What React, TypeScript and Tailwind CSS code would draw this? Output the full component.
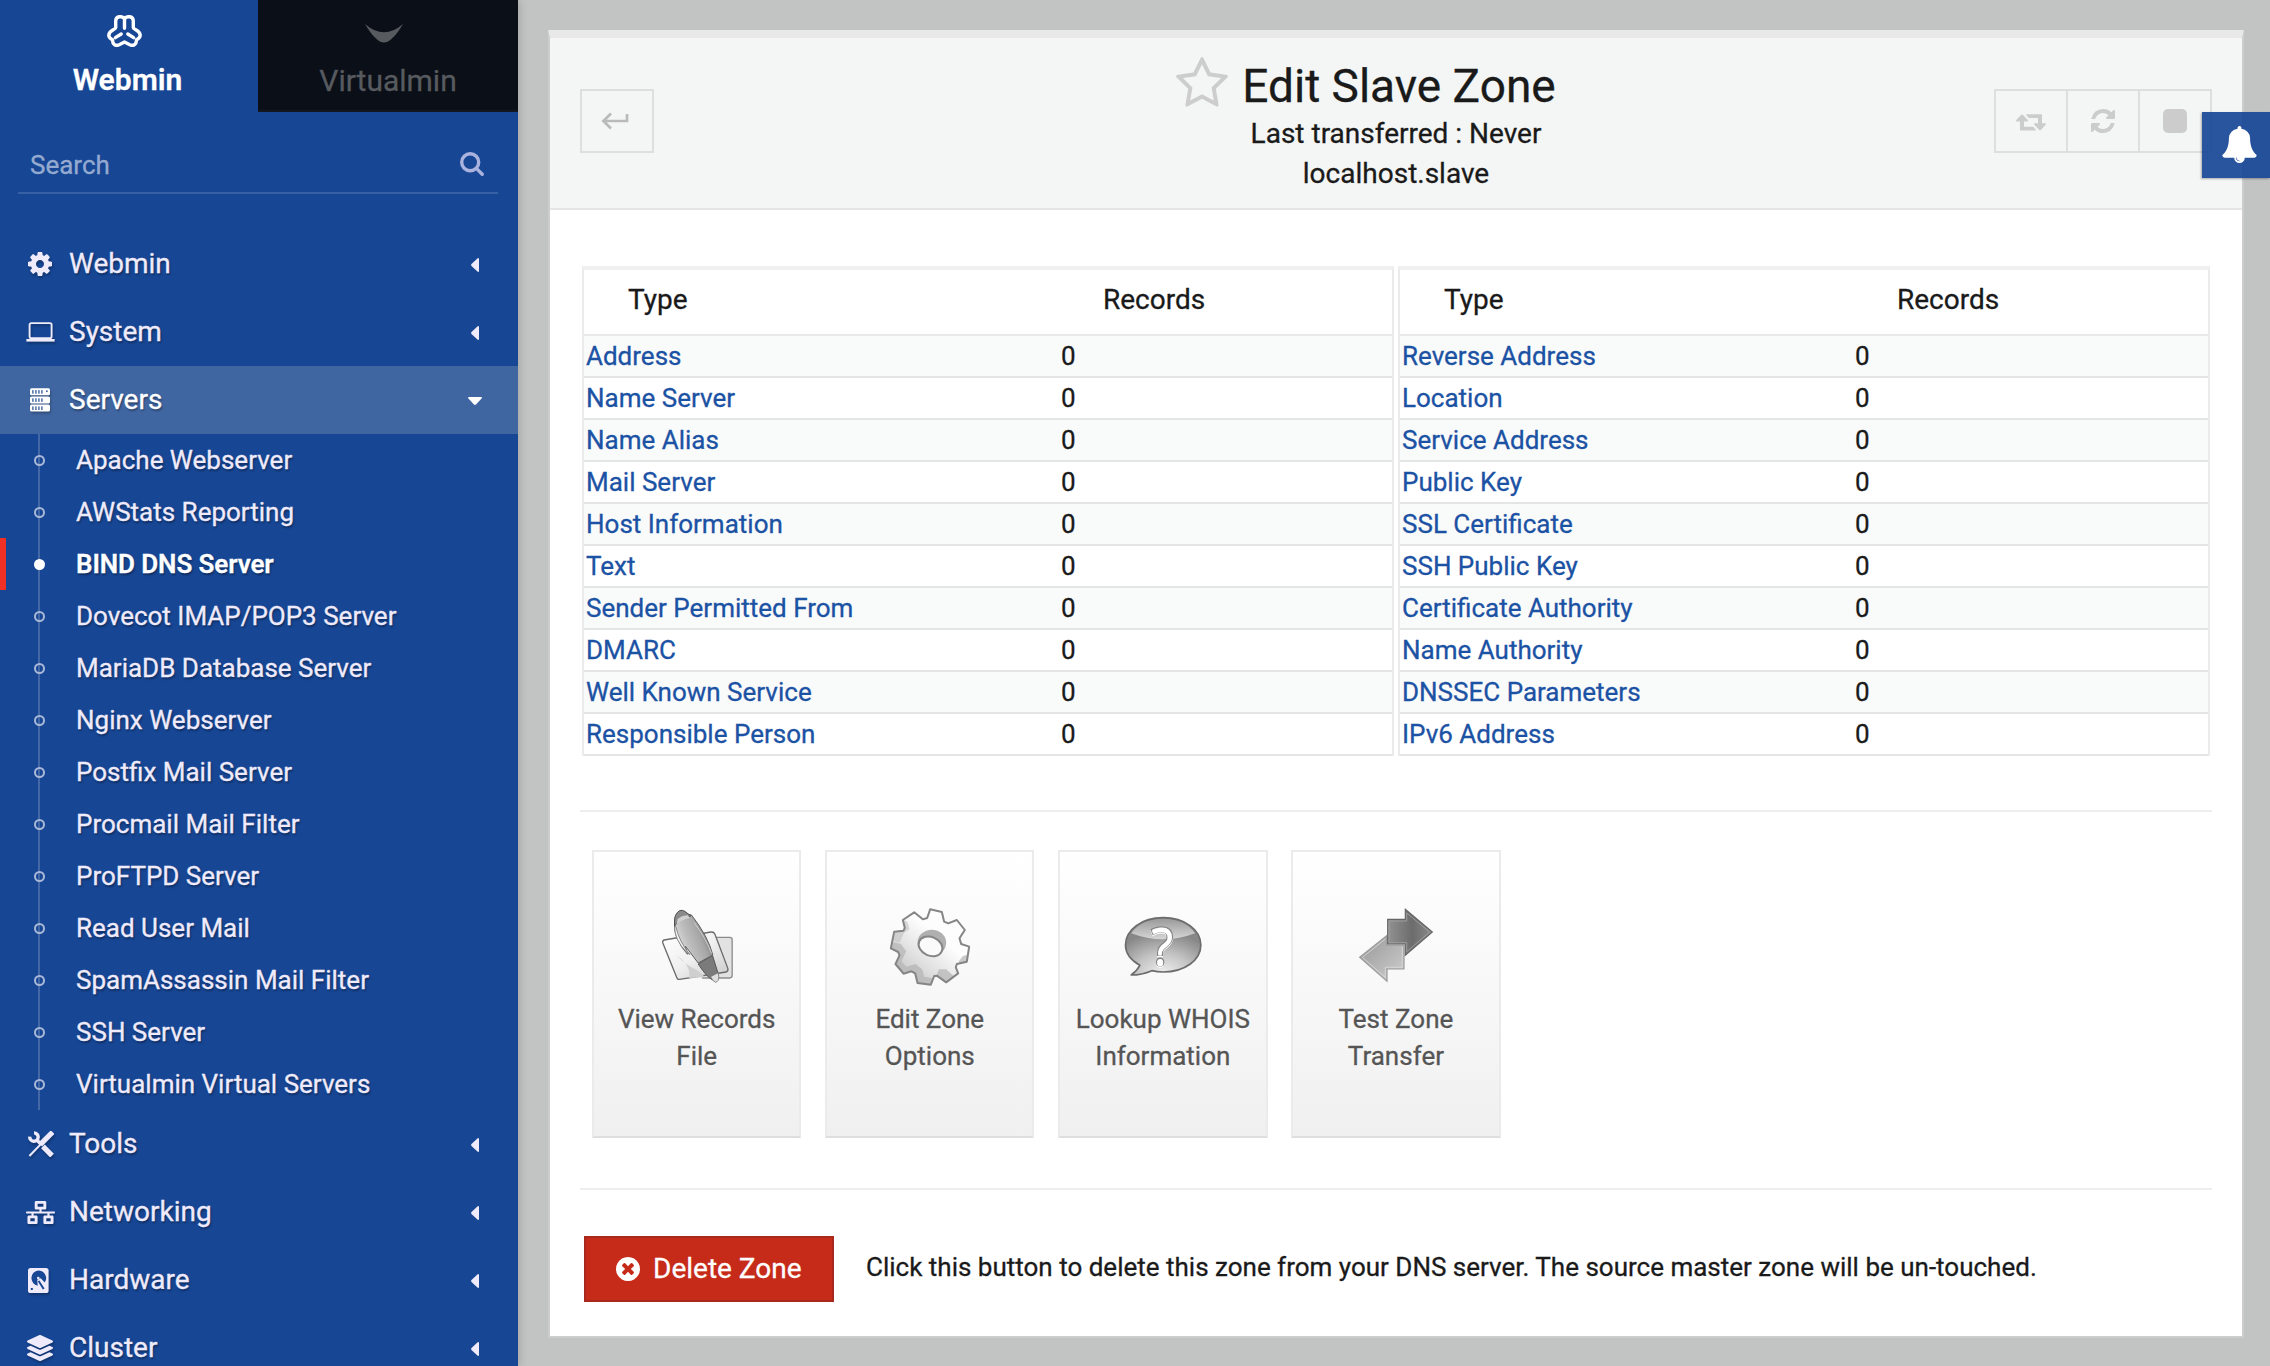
import React from "react";
import { FaNetworkWired, FaLayerGroup } from "react-icons/fa";

const BELL =
  "M912 1696q0-16-16-16-59 0-101.5-42.5t-42.5-101.5q0-16-16-16t-16 16q0 73 51.5 124.5t124.5 51.5q16 0 16-16zm816-288q0 52-38 90t-90 38h-448q0 106-75 181t-181 75-181-75-75-181h-448q-52 0-90-38t-38-90q50-42 91-88t85-119.5 74.5-158.5 50-206 19.5-260q0-152 117-282.5t307-158.5q-8-19-8-39 0-40 28-68t68-28 68 28 28 68q0 20-8 39 190 28 307 158.5t117 282.5q0 139 19.5 260t50 206 74.5 158.5 85 119.5 91 88z";
const COG =
  "M1152 896q0-106-75-181t-181-75-181 75-75 181 75 181 181 75 181-75 75-181zm512-109v222q0 12-8 23t-20 13l-185 28q-19 54-39 91 35 50 107 138 10 12 10 25t-9 23q-27 37-99 108t-94 71q-12 0-26-9l-138-108q-44 23-91 38-16 136-29 186-7 28-36 28h-222q-14 0-24.5-8.5t-11.5-21.5l-28-184q-49-16-90-37l-141 107q-10 9-25 9-14 0-25-11-126-114-165-168-7-10-7-23 0-12 8-23 15-21 51-66.5t54-70.5q-27-50-41-99l-183-27q-13-2-21-12.5t-8-23.5v-222q0-12 8-23t19-13l186-28q14-46 39-92-40-57-107-138-10-12-10-24 0-10 9-23 26-36 98.5-107.5t94.5-71.5q13 0 26 10l138 107q44-23 91-38 16-136 29-186 7-28 36-28h222q14 0 24.5 8.5t11.5 21.5l28 184q49 16 90 37l142-107q9-9 24-9 13 0 25 10 129 119 165 170 7 8 7 22 0 12-8 23-15 21-51 66.5t-54 70.5q26 50 41 98l183 28q13 2 21 12.5t8 23.5z";
const REFRESH =
  "M1639 1056q0 5-1 7-64 268-268 434.5t-478 166.5q-146 0-282.5-55t-243.5-157l-129 129q-19 19-45 19t-45-19-19-45v-448q0-26 19-45t45-19h448q26 0 45 19t19 45-19 45l-137 137q71 66 161 102t187 36q134 0 250-65t186-179q11-17 53-117 8-23 30-23h192q13 0 22.5 9.5t9.5 22.5zm25-800v448q0 26-19 45t-45 19h-448q-26 0-45-19t-19-45 19-45l138-138q-148-137-349-137-134 0-250 65t-186 179q-11 17-53 117-8 23-30 23h-199q-13 0-22.5-9.5t-9.5-22.5v-7q65-268 270-434.5t480-166.5q146 0 284 55.5t245 156.5l130-129q19-19 45-19t45 19 19 45z";
const RETWEET =
  "M1280 1504q0 13-9.5 22.5t-22.5 9.5h-960q-8 0-13.5-2t-9-7-5.5-8-3-11.5-1-11.5v-600h-192q-26 0-45-19t-19-45q0-24 15-41l320-384q19-22 49-22t49 22l320 384q15 17 15 41 0 26-19 45t-45 19h-192v384h576q16 0 25 11l160 192q7 10 7 21zm640-416q0 24-15 41l-320 384q-20 23-49 23t-49-23l-320-384q-15-17-15-41 0-26 19-45t45-19h192v-384h-576q-16 0-25-12l-160-192q-7-9-7-20 0-13 9.5-22.5t22.5-9.5h960q8 0 13.5 2t9 7 5.5 8 3 11.5 1 11.5v600h192q26 0 45 19t19 45z";
const TIMES_CIRCLE =
  "M1277 1122q0-26-19-45l-181-181 181-181q19-19 19-45 0-27-19-46l-90-90q-19-19-46-19-26 0-45 19l-181 181-181-181q-19-19-45-19-27 0-46 19l-90 90q-19 19-19 46 0 26 19 45l181 181-181 181q-19 19-19 45 0 27 19 46l90 90q19 19 46 19 26 0 45-19l181-181 181 181q19 19 45 19 27 0 46-19l90-90q19-19 19-46zm387-226q0 209-103 385.5t-279.5 279.5-385.5 103-385.5-103-279.5-279.5-103-385.5 103-385.5 279.5-279.5 385.5-103 385.5 103 279.5 279.5 103 385.5z";
const STAR =
  "M1201 1004l306-297-422-62-189-382-189 382-422 62 306 297-73 421 378-199 377 199zm527-357q0 22-26 48l-363 354 86 500q1 7 1 20 0 50-41 50-19 0-40-12l-449-236-449 236q-22 12-40 12-21 0-31.5-14.5t-10.5-35.5q0-6 2-20l86-500-364-354q-25-27-25-48 0-37 56-46l502-73 225-455q19-41 49-41t49 41l225 455 502 73q56 9 56 46z";

function Glyph({ d, className }: { d: string; className: string }) {
  return (
    <svg viewBox="0 0 1792 1792" fill="currentColor" className={className}>
      <path d={d} />
    </svg>
  );
}

function WebminLogo() {
  return (
    <svg viewBox="0 0 35 32" className="h-8 w-[35px]" fill="none" stroke="#fff" strokeWidth="3.4" strokeLinecap="round" strokeLinejoin="round">
      <path d="M17.5 3.6C15.4 .9 8.9 .6 8.7 6v6.6C8.6 14.8 1.8 15.4 1.8 20.2c0 2.6 2 3.6 3.8 4.6-.4 4.6 3 6.6 6.600 4.900l5.300-2.700 5.300 2.700c3.600 1.700 7-.300 6.600-4.900 1.800-1 3.800-2 3.800-4.600 0-4.800-6.800-5.400-6.900-7.600V6C26.100.6 19.600.9 17.500 3.600z" />
      <path d="M17.5 3.6v9.600M14.200 19l-5.800 3.600M20.800 19l5.800 3.600" />
    </svg>
  );
}

function LaptopIcon() {
  return (
    <svg viewBox="0 0 29 20" className="h-5 w-[29px]">
      <rect x="3.6" y="1.1" width="22" height="15" rx="1.6" fill="none" stroke="currentColor" strokeWidth="1.9" />
      <rect x="0.4" y="17" width="28.2" height="2.6" fill="currentColor" />
    </svg>
  );
}

function ServerIcon() {
  return (
    <svg viewBox="0 0 20 24" className="h-6 w-5">
      {[0.3, 8.5, 16.6].map((y, r) => (
        <g key={y}>
          <rect x="0" y={y} width="20" height="7" rx="1.6" fill="currentColor" />
          {[2.2, 5.2, 8.2, 11.2].map((x) => (
            <rect key={x} x={x} y={y + 1.8} width="1.4" height="3.6" fill="#4066a2" />
          ))}
          {r === 0 && <rect x="16" y="2.4" width="1.7" height="1.7" fill="#4066a2" />}
        </g>
      ))}
    </svg>
  );
}

function ToolsIcon() {
  return (
    <svg viewBox="0 0 26 26" className="h-[26px] w-[26px]" fill="none" stroke="currentColor">
      <path d="M1.8 5.6A4.2 4.2 0 1 0 6 1.9" strokeWidth="3.4" />
      <path d="M8.6 8.8l4.4 4.4" strokeWidth="3.4" />
      <path d="M16.8 17.2l5.400 5.600" strokeWidth="5.2" strokeLinecap="square" />
      <path d="M22.8 3L14 11.8" strokeWidth="5.2" strokeLinecap="square" />
      <path d="M13.6 12.4L1.4 25" strokeWidth="2" />
    </svg>
  );
}

function DriveIcon() {
  return (
    <svg viewBox="0 0 21 25" className="h-[25px] w-[21px]">
      <rect x="0" y="0" width="20.6" height="25" rx="2.6" fill="currentColor" />
      <path d="M10.3 2.400a7.800 7.800 0 0 1 6.400 12.200l-4-4.400-3.400 1.600.4 6A7.800 7.800 0 0 1 10.300 2.400z" fill="#174694" />
      <circle cx="10.300" cy="10" r="1.300" fill="currentColor" />
      <path d="M9.800 13.200l1.600-.6 5.200 7.800-1.800 1.200z" fill="#174694" />
      <rect x="2.8" y="20" width="2" height="2" fill="#174694" />
    </svg>
  );
}

function CaretLeft() {
  return (
    <svg viewBox="0 0 8 14" className="h-3.5 w-2" fill="currentColor">
      <path d="M8 1v12c0 1-.9 1.2-1.6.6L.5 8Q-.3 7 .5 6L6.4.4C7.100-.2 8 0 8 1z" />
    </svg>
  );
}

function CaretDown() {
  return (
    <svg viewBox="0 0 14 8" className="h-2 w-3.5" fill="currentColor">
      <path d="M1 0h12c1 0 1.200.9.6 1.600L8 7.500Q7 8.300 6 7.500L.4 1.600C-.2.9 0 0 1 0z" />
    </svg>
  );
}

function MenuRow({ icon, label, open, wide }: { icon: React.ReactNode; label: string; open?: boolean; wide?: boolean }) {
  return (
    <div className={`flex h-[68px] shrink-0 items-center ${open ? "bg-[#4066a2] text-white" : "text-[#efebfb]"}`}>
      <span className={`flex w-20 items-center justify-center drop-shadow-[1px_2px_1px_rgba(0,0,0,0.25)] ${open || wide ? "" : "pl-px"}`}>{icon}</span>
      <span className="-ml-[11px] flex-1 pb-px text-[28px] leading-8 [text-shadow:1px_2px_2px_rgba(0,0,0,0.35)]">{label}</span>
      <span className="mr-[29px] flex w-[29px] items-center justify-center pt-0.5">{open ? <CaretDown /> : <CaretLeft />}</span>
    </div>
  );
}

const servers = [
  "Apache Webserver",
  "AWStats Reporting",
  "BIND DNS Server",
  "Dovecot IMAP/POP3 Server",
  "MariaDB Database Server",
  "Nginx Webserver",
  "Postfix Mail Server",
  "Procmail Mail Filter",
  "ProFTPD Server",
  "Read User Mail",
  "SpamAssassin Mail Filter",
  "SSH Server",
  "Virtualmin Virtual Servers",
];

function SubRow({ label }: { label: string }) {
  const active = label === "BIND DNS Server";
  return (
    <div className={`flex h-[52px] items-center border-l-[6px] ${active ? "border-[#ee3124]" : "border-transparent"}`}>
      <span className="relative ml-8 flex h-full w-0.5 items-center justify-center bg-[#4468a5]">
        <span className={`size-[11px] shrink-0 rounded-full ${active ? "bg-white" : "border-2 border-[#a9b8d6]"}`} />
      </span>
      <span
        className={`ml-9 pb-px text-[26px] leading-8 [text-shadow:1px_2px_2px_rgba(0,0,0,0.35)] ${active ? "font-semibold tracking-[-0.1px] text-white" : "text-[#efebfb]"}`}
      >
        {label}
      </span>
    </div>
  );
}

function Sidebar() {
  return (
    <aside className="z-10 flex h-full w-[518px] shrink-0 flex-col overflow-hidden bg-[#174694] shadow-[0_0_9px_rgba(0,0,0,0.22)]">
      <div className="flex h-28 shrink-0">
        <div className="flex w-[258px] flex-col items-center pt-[15px] text-white">
          <div className="-ml-2.5">
            <WebminLogo />
          </div>
          <span className="mt-[15px] -ml-[3px] text-[30px] leading-9 font-semibold">Webmin</span>
        </div>
        <div className="flex w-[260px] flex-col items-center border-b-2 border-[#131820] bg-[#0b0f17] pt-6 text-[#575a5f]">
          <svg viewBox="0 0 38 19" className="-ml-2 h-[19px] w-[38px]" fill="currentColor">
            <path d="M0 0q9.500 8.300 19 8.300T38 0C31 12 24 18.600 19 18.600S7 12 0 0z" />
          </svg>
          <span className="mt-5 text-[30px] leading-9">Virtualmin</span>
        </div>
      </div>
      <div className="mt-8 mr-5 ml-[18px] flex h-[50px] shrink-0 items-start justify-between border-b-2 border-[#3861a5] pr-3.5 pl-3">
        <span className="pt-[5px] text-[26px] leading-8 text-[#95aad0]">Search</span>
        <svg viewBox="0 0 24 24" className="mt-2 size-6" fill="none" stroke="#aab2de" strokeWidth="3.4" strokeLinecap="round">
          <circle cx="10.200" cy="10.200" r="8.500" />
          <path d="M16.400 16.400l5.800 5.800" />
        </svg>
      </div>
      <div className="mt-9 flex flex-col">
        <MenuRow icon={<Glyph d={COG} className="size-7" />} label="Webmin" wide />
        <MenuRow icon={<LaptopIcon />} label="System" />
        <MenuRow icon={<ServerIcon />} label="Servers" open />
        {servers.map((s) => (
          <SubRow key={s} label={s} />
        ))}
        <MenuRow icon={<ToolsIcon />} label="Tools" />
        <MenuRow icon={<FaNetworkWired className="size-[29px]" />} label="Networking" />
        <MenuRow icon={<span className="pr-1"><DriveIcon /></span>} label="Hardware" />
        <MenuRow icon={<span className="pr-0.5"><FaLayerGroup className="size-[26px]" /></span>} label="Cluster" />
      </div>
    </aside>
  );
}

function RecordTable({ rows, typeWidth }: { rows: string[]; typeWidth: string }) {
  return (
    <div className="flex-1 border-x-2 border-t-4 border-x-[#ebebeb] border-t-[#f0f0f0]">
      <div className="flex h-[66px] items-center border-b-2 border-[#e9e9e9] pb-1 text-[28px] text-[#1a1a1a]">
        <span className={`${typeWidth} shrink-0 pl-11`}>Type</span>
        <span className="pl-[45px]">Records</span>
      </div>
      {rows.map((r) => (
        <div key={r} className="flex h-[42px] items-center border-b-2 border-[#e4e5e5] text-[26px] odd:bg-white even:bg-[#f9fbfa]">
          <span className={`${typeWidth} shrink-0 pl-0.5 text-[#1c52a4]`}>{r}</span>
          <span className="pl-[3px] text-[#1a1a1a]">0</span>
        </div>
      ))}
    </div>
  );
}

const left = ["Address", "Name Server", "Name Alias", "Mail Server", "Host Information", "Text", "Sender Permitted From", "DMARC", "Well Known Service", "Responsible Person"];
const right = ["Reverse Address", "Location", "Service Address", "Public Key", "SSL Certificate", "SSH Public Key", "Certificate Authority", "Name Authority", "DNSSEC Parameters", "IPv6 Address"];

function RecordsIcon() {
  return (
    <svg viewBox="230.500 198 300 300" className="size-[100px]">
      <defs>
        <linearGradient id="pen" x1="0.150" y1="0.650" x2="0.850" y2="0.300">
          <stop offset="0" stopColor="#d8d8d8" />
          <stop offset="0.300" stopColor="#bdbdbd" />
          <stop offset="0.700" stopColor="#a6a6a6" />
          <stop offset="1" stopColor="#7d7d7d" />
        </linearGradient>
        <linearGradient id="sheet" x1="0" y1="0" x2="1" y2="1">
          <stop offset="0" stopColor="#fff" />
          <stop offset="0.500" stopColor="#f0f0f0" />
          <stop offset="1" stopColor="#c9c9c9" />
        </linearGradient>
      </defs>
      <path d="M425 322h54q7 0 7 7v107q0 8-8 8h-80z" fill="#e2e2e2" stroke="#8c8c8c" strokeWidth="4" />
      <path d="M282 330l140-24q9-1 12 6l39 103q2 8-5 11l-140 22q-6 1-8-5l-42-104q-2-7 4-9z" fill="url(#sheet)" stroke="#6b6b6b" strokeWidth="4" />
      <path d="M318 375q28 30 62 45l26 22-50 2q10-35-38-69z" fill="#cfcfcf" />
      <path d="M384 402l43-26 16 52q2 20-10 24-20-5-49-50z" fill="#7b7b7b" stroke="#555" strokeWidth="3" />
      <path d="M421 440l23-12 2 12q0 15-10 17-9-4-15-17z" fill="#dedede" stroke="#777" strokeWidth="2.500" />
      <path d="M315 262q-5 34 4 58 14 34 33 53l-6-24 38 50 44-24q-14-56-64-120-22-8-49 7z" fill="url(#pen)" stroke="#606060" strokeWidth="3" />
      <path d="M313 290q0 40 36 76l10 8q-32-40-42-84z" fill="#f2f2f2" stroke="#777" strokeWidth="2.500" />
      <path d="M313 276q-1-24 15-34 8-3 16 2l18 14q-30 2-49 30z" fill="#8a8a8a" stroke="#505050" strokeWidth="3" />
      <path d="M323 266q14-10 30-10l6 8q-22 4-40 18z" fill="#d0d0d0" />
      <path d="M372 278q36 48 52 92" fill="none" stroke="#cfcfcf" strokeWidth="3" />
    </svg>
  );
}

function OptionsIcon() {
  const gear =
    "M1080 238L1115 246L1122 275L1134 280L1160 270L1184 300L1168 325L1173 342L1197 350L1190 395L1160 402L1157 412L1164 430L1128 457L1100 437L1092 438L1082 464L1042 459L1035 430L1024 424L1000 431L976 402L988 376L984 366L962 355L972 305L1000 302L1004 294L998 270L1032 247L1058 268L1071 264Z";
  return (
    <svg viewBox="929.500 198 300 300" className="size-[100px]">
      <defs>
        <linearGradient id="gear" x1="0.100" y1="0.900" x2="0.700" y2="0.200">
          <stop offset="0" stopColor="#c4c4c4" />
          <stop offset="0.400" stopColor="#e2e2e2" />
          <stop offset="0.800" stopColor="#fdfdfd" />
        </linearGradient>
        <clipPath id="gear-clip">
          <path d={gear} />
        </clipPath>
      </defs>
      <path d={gear} fill="url(#gear)" />
      <g clipPath="url(#gear-clip)">
        <path
          d="M960 358l8-22 24 6 16 22-14 30 14 16 28-8 20 16 6 22 34 6 10-28 22 0 22 20 24-18-8-26 12-16 32-8v120h-250z"
          fill="#b4b4b4"
          opacity="0.700"
        />
        <path d="M996 268l16 8 6 22-16 10-14 30-30-10z" fill="#c2c2c2" opacity="0.600" />
      </g>
      <path d={gear} fill="none" stroke="#858585" strokeWidth="6" strokeLinejoin="round" />
      <ellipse cx="1085" cy="338" rx="43" ry="39" fill="#b0b0b0" />
      <ellipse cx="1081" cy="349" rx="37" ry="28" transform="rotate(24 1081 349)" fill="#fafafa" stroke="#858585" strokeWidth="6" />
    </svg>
  );
}

function WhoisIcon() {
  const bubble = "M368 263C432 263 481 299 481 345S432 426 368 426Q350 426 334 422Q304 435 272 435Q290 422 298 406C272 391 255 369 255 345C255 299 304 263 368 263Z";
  return (
    <svg viewBox="217.500 198 300 300" className="size-[100px]">
      <defs>
        <radialGradient id="bubble" cx="0.500" cy="1" r="0.750">
          <stop offset="0" stopColor="#f2f2f2" />
          <stop offset="0.500" stopColor="#c4c4c4" />
          <stop offset="1" stopColor="#878787" />
        </radialGradient>
        <linearGradient id="gloss" x1="0" y1="0" x2="0" y2="1">
          <stop offset="0" stopColor="#9a9a9a" />
          <stop offset="1" stopColor="#d6d6d6" />
        </linearGradient>
      </defs>
      <path d={bubble} fill="url(#bubble)" />
      <path d="M272 310C290 280 330 266 368 266S446 280 464 310Q368 346 272 310Z" fill="url(#gloss)" />
      <path d={bubble} fill="none" stroke="#6c6c6c" strokeWidth="5" strokeLinejoin="round" />
      <text x="365" y="404" textAnchor="middle" fontFamily="Open Sans" fontWeight="500" fontSize="152" fill="#fff" stroke="#868686" strokeWidth="8" paintOrder="stroke">
        ?
      </text>
    </svg>
  );
}

function TransferIcon() {
  return (
    <svg viewBox="918 198 300 300" className="size-[100px]">
      <defs>
        <linearGradient id="fwd" x1="0" y1="0" x2="1" y2="0">
          <stop offset="0" stopColor="#929292" />
          <stop offset="0.550" stopColor="#6c6c6c" />
          <stop offset="1" stopColor="#8a8a8a" />
        </linearGradient>
        <linearGradient id="back" x1="0" y1="0" x2="1" y2="1">
          <stop offset="0.200" stopColor="#a2a2a2" />
          <stop offset="1" stopColor="#cfcfcf" />
        </linearGradient>
      </defs>
      <path d="M1092 345V417H1041V454L959 382L1040 317V345Z" fill="url(#back)" stroke="#999" strokeWidth="3.500" />
      <path d="M1087 350V412H1036V442L967 382L1036 327" fill="none" stroke="#dadada" strokeWidth="2.500" />
      <path d="M1043 268H1096V238L1177 306L1096 376V342H1043Z" fill="url(#fwd)" stroke="#666" strokeWidth="3.500" />
      <path d="M1047 273H1100V249L1169 306L1100 365V338H1047Z" fill="none" stroke="#a2a2a2" strokeWidth="2.500" />
    </svg>
  );
}

function Card({ icon, lines }: { icon: React.ReactNode; lines: [string, string] }) {
  return (
    <div className="flex h-72 w-[209.4px] flex-col items-center border-2 border-[#ebebeb] border-b-[#dedede] bg-linear-to-b from-white to-[#f0f0f0] pt-11 text-center text-[26px] leading-[37px] text-[#555] [text-shadow:0_1px_0_#fff]">
      {icon}
      <div className="mt-[4.500px]">
        {lines[0]}
        <br />
        {lines[1]}
      </div>
    </div>
  );
}

function PageHeader() {
  return (
    <header className="flex h-[172px] shrink-0 items-start justify-between border-b-2 border-[#e5e5e5] bg-[#f4f6f5] px-[30px]">
      <div className="mt-[51px] flex w-[218px]">
        <button className="flex h-16 w-[74px] items-center justify-center border-2 border-[#dedede] pr-[5px]">
          <svg viewBox="0 0 28 18" className="h-[18px] w-7" fill="none" stroke="#bababa" strokeWidth="2.700">
            <path d="M10 1.500L2.400 9l7.600 7.500M2.600 9H26V2" />
          </svg>
        </button>
      </div>
      <div className="flex flex-col items-center pt-[21px] text-[28px] leading-10 text-[#1a1a1a]">
        <h1 className="relative left-[3px] mb-px text-[46px] leading-[54px] whitespace-nowrap">
          <Glyph d={STAR} className="absolute -top-[3px] right-full mr-3 size-14 text-[#cdcdcd]" />
          Edit Slave Zone
        </h1>
        <span>Last transferred : Never</span>
        <span>localhost.slave</span>
      </div>
      <div className="mt-[51px] flex h-16 w-[218px] border-2 border-[#dedede] text-[#ccc]">
        <button className="flex w-[72px] items-center justify-center border-r-2 border-[#dedede]">
          <svg viewBox="0 0 1920 1792" preserveAspectRatio="none" className="h-[25px] w-[30px]" fill="currentColor">
            <path d={RETWEET} />
          </svg>
        </button>
        <button className="flex w-[72px] items-center justify-center border-r-2 border-[#dedede]">
          <Glyph d={REFRESH} className="size-7" />
        </button>
        <button className="flex flex-1 items-center justify-center">
          <span className="size-6 rounded-[5px] bg-[#ccc]" />
        </button>
      </div>
    </header>
  );
}

export default function App() {
  return (
    <div className="relative flex h-[1366px] w-[2270px] overflow-hidden bg-[#c2c4c3] font-['Roboto',sans-serif] [-webkit-text-stroke:0.3px]">
      <Sidebar />
      <main className="mt-[30px] ml-[30px] flex h-[1308px] w-[1696px] flex-col border-2 border-t-8 border-[#cdcdcd] border-t-[#e8e8e8] bg-white">
        <PageHeader />
        <div className="flex flex-col px-[30px]">
          <div className="mx-0.5 mt-14 flex gap-1">
            <RecordTable rows={left} typeWidth="w-[474px]" />
            <RecordTable rows={right} typeWidth="w-[452px]" />
          </div>
          <div className="mt-[54px] h-0.5 bg-[#eeeeee]" />
          <div className="mt-[38px] ml-3 flex gap-[23.7px]">
            <Card icon={<RecordsIcon />} lines={["View Records", "File"]} />
            <Card icon={<OptionsIcon />} lines={["Edit Zone", "Options"]} />
            <Card icon={<WhoisIcon />} lines={["Lookup WHOIS", "Information"]} />
            <Card icon={<TransferIcon />} lines={["Test Zone", "Transfer"]} />
          </div>
          <div className="mt-[50px] h-0.5 bg-[#eeeeee]" />
          <div className="mt-[46px] ml-1 flex items-center">
            <button className="flex h-[66px] w-[250px] items-center border-2 border-[#a8281b] bg-[#c62a18] pl-7 text-[28px] text-white">
              <Glyph d={TIMES_CIRCLE} className="size-7" />
              <span className="ml-[11px]">Delete Zone</span>
            </button>
            <p className="ml-8 pb-1 text-[26px] text-[#1a1a1a]">
              Click this button to delete this zone from your DNS server. The source master zone will be un-touched.
            </p>
          </div>
        </div>
      </main>
      <div className="absolute top-28 right-0 flex h-[66px] w-[68px] items-start bg-[#174696]/92 pt-3.5 pl-[19px] text-white shadow-[-1px_1px_2px_rgba(0,0,0,0.3)]">
        <Glyph d={BELL} className="size-[37px]" />
      </div>
    </div>
  );
}
